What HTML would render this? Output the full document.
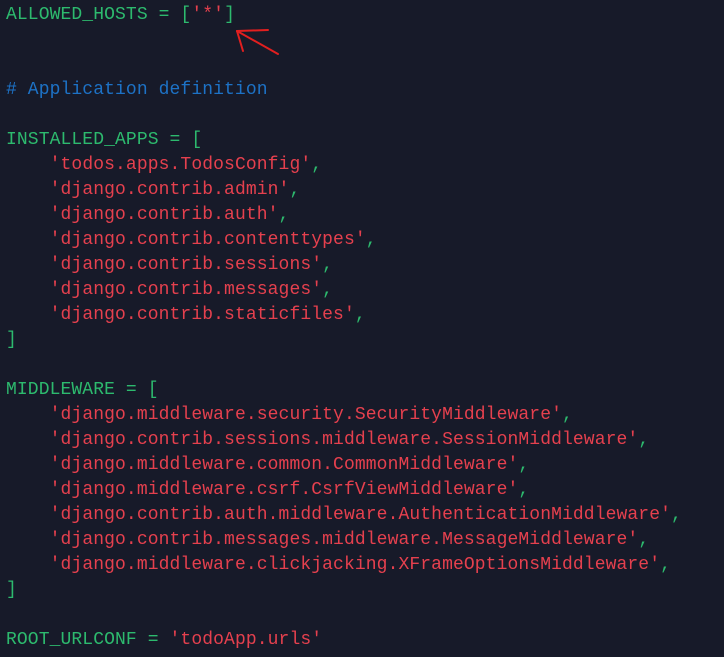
<!DOCTYPE html>
<html><head><style>
html,body{margin:0;padding:0;background:#171a29;width:724px;height:657px;overflow:hidden}
pre{margin:0;position:absolute;left:6px;top:3px;font-family:"Liberation Mono",monospace;font-size:18px;line-height:25px;letter-spacing:0.1px;color:#2dba6e}
.s{color:#e5404e}.c{color:#1d72c6}
</style></head><body>
<pre>ALLOWED_HOSTS = [<span class="s">'*'</span>]


<span class="c"># Application definition</span>

INSTALLED_APPS = [
    <span class="s">'todos.apps.TodosConfig'</span>,
    <span class="s">'django.contrib.admin'</span>,
    <span class="s">'django.contrib.auth'</span>,
    <span class="s">'django.contrib.contenttypes'</span>,
    <span class="s">'django.contrib.sessions'</span>,
    <span class="s">'django.contrib.messages'</span>,
    <span class="s">'django.contrib.staticfiles'</span>,
]

MIDDLEWARE = [
    <span class="s">'django.middleware.security.SecurityMiddleware'</span>,
    <span class="s">'django.contrib.sessions.middleware.SessionMiddleware'</span>,
    <span class="s">'django.middleware.common.CommonMiddleware'</span>,
    <span class="s">'django.middleware.csrf.CsrfViewMiddleware'</span>,
    <span class="s">'django.contrib.auth.middleware.AuthenticationMiddleware'</span>,
    <span class="s">'django.contrib.messages.middleware.MessageMiddleware'</span>,
    <span class="s">'django.middleware.clickjacking.XFrameOptionsMiddleware'</span>,
]

ROOT_URLCONF = <span class="s">'todoApp.urls'</span></pre>
<svg width="724" height="657" style="position:absolute;left:0;top:0">
<g stroke="#e21f1f" stroke-width="2" fill="none" stroke-linecap="round">
<path d="M237 31 L278 54"/><path d="M237 31 L268 30"/><path d="M237 31 L243 51"/>
</g></svg>
</body></html>
